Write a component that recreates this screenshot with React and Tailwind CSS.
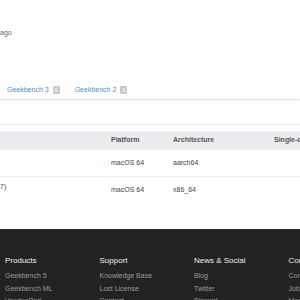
import React from 'react'

const tabs = ['Geekbench 3', 'Geekbench 2']

const rows = [
  { name: '', platform: 'macOS 64', arch: 'aarch64' },
  { name: '7)', platform: 'macOS 64', arch: 'x86_64' },
]

const footer = [
  { title: 'Products', links: ['Geekbench 5', 'Geekbench ML', 'VoodooPad'] },
  { title: 'Support', links: ['Knowledge Base', 'Lost License', 'Contact'] },
  { title: 'News & Social', links: ['Blog', 'Twitter', 'Discord'] },
  { title: 'Company', links: ['Contact', 'Jobs', 'Media'] },
]

export default function App() {
  return (
    <div className="w-[300px] h-[300px] overflow-hidden bg-white flex flex-col font-['Liberation_Sans',Arial,sans-serif]">
      <div className="h-[28px] shrink-0" />
      <p className="h-[10px] leading-[10px] text-[7px] text-[#666] shrink-0">ago</p>

      {/* tabs */}
      <div className="mt-[43px] h-[19px] shrink-0 flex items-center pl-[7px] border-b border-[#e3e3e3] shadow-[0_1px_2px_rgba(0,0,0,0.04)]">
        {tabs.map((t) => (
          <div key={t} className="flex items-center mr-[15px]">
            <span className="text-[7px] leading-[10px] text-[#4a8fd6]">{t}</span>
            <span className="ml-[4px] w-[7px] h-[8px] rounded-[1px] bg-[#c9c9c9] text-white text-[5px] leading-[8px] text-center">0</span>
          </div>
        ))}
      </div>

      <div className="h-[25px] shrink-0 border-b border-[#ededed]" />
      <div className="h-[6px] shrink-0" />

      {/* table */}
      <div className="shrink-0 h-[19px] bg-[#ececf0] flex items-center text-[7px] font-semibold text-[#555] whitespace-nowrap">
        <div className="w-[111px] shrink-0" />
        <div className="w-[62px] shrink-0">Platform</div>
        <div className="w-[101px] shrink-0">Architecture</div>
        <div className="shrink-0">Single-core</div>
      </div>
      {rows.map((r, i) => (
        <div
          key={i}
          className={`shrink-0 h-[27px] flex items-center text-[7px] text-[#444] whitespace-nowrap ${i === 0 ? 'border-b border-[#eeeeee]' : ''}`}
        >
          <div className="w-[111px] shrink-0 self-start pt-[5px] leading-[10px]">{r.name}</div>
          <div className="w-[62px] shrink-0">{r.platform}</div>
          <div className="w-[101px] shrink-0">{r.arch}</div>
        </div>
      ))}

      <div className="flex-1" />

      {/* footer */}
      <footer className="h-[71px] shrink-0 bg-[#222222] border-t border-[#2e2e2e] pt-[26px] pl-[5px] flex">
        {footer.map((col) => (
          <div key={col.title} className="w-[94.5px] shrink-0 whitespace-nowrap">
            <h4 className="text-[8px] leading-[10px] font-medium text-[#eeeeee] mb-[4px]">{col.title}</h4>
            {col.links.map((l) => (
              <p key={l} className="text-[7px] leading-[12.5px] text-[#9a9a9a]">{l}</p>
            ))}
          </div>
        ))}
      </footer>
    </div>
  )
}
